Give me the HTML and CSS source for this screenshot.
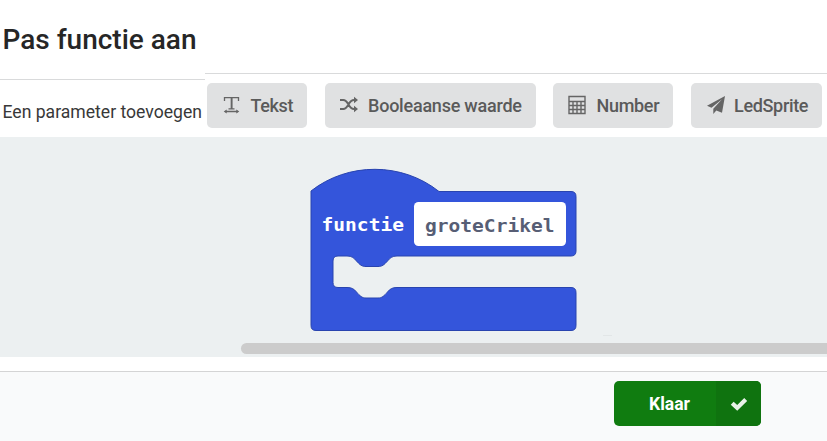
FILE: index.html
```html
<!DOCTYPE html>
<html lang="nl">
<head>
<meta charset="utf-8">
<title>Pas functie aan</title>
<link rel="stylesheet" href="styles.css">
</head>
<body>
<main class="dialog">
  <header class="header"><h1 class="title"><svg width="200" height="40"><text x="2.5" y="30" textLength="194" lengthAdjust="spacingAndGlyphs">Pas functie aan</text></svg></h1></header>
  <section class="toolbar">
    <div class="label"><svg width="205" height="30"><text x="2.5" y="20" textLength="199.5" lengthAdjust="spacingAndGlyphs">Een parameter toevoegen</text></svg></div>
    <div class="params">
      <button class="param text"><svg class="icon" viewBox="0 0 18 18"><path d="M1.5 5V1.7h14V5M8.5 1.7v11M5.5 12.8h6M2.5 15.5h12" fill="none" stroke="currentColor" stroke-width="1.3"/><path d="M7.8 2h1.7v11H7.8zM.7 15.5l3-2v4zM16.3 15.5l-3-2v4z"/></svg><svg class="caption" width="44" height="24"><text x="0.5" y="17" textLength="43">Tekst</text></svg></button>
      <button class="param bool"><svg class="icon" viewBox="0 0 18 18"><path d="M0 4h3.2c5.7 0 4.8 9 10.8 9h1M0 13h3.2c5.7 0 4.8-9 10.8-9h1" fill="none" stroke="currentColor" stroke-width="2"/><path d="M14 .7L18 4l-4 3.3zM14 9.7l4 3.3-4 3.3z"/></svg><svg class="caption" width="155" height="24"><text x="0" y="17" textLength="154">Booleaanse waarde</text></svg></button>
      <button class="param number"><svg class="icon" viewBox="0 0 18 18"><path d="M1 .5h16v17H1zM1 5.500h16M1 9.500h16M1 13.500h16M5 5.500v12M9 5.500v12M13 5.500v12" fill="none" stroke="currentColor" stroke-width="1.400"/></svg><svg class="caption" width="64" height="24"><text x="-0.5" y="17" textLength="63">Number</text></svg></button>
      <button class="param sprite"><svg class="icon" viewBox="0 0 18 18"><path d="M18 0L0 9.8l4.500 2L15 3.200 6.300 12.700V18l3-3.500 5.700 2.200z"/></svg><svg class="caption" width="76" height="24"><text x="0" y="17" textLength="74.5">LedSprite</text></svg></button>
    </div>
  </section>
  <section class="workspace">
    <svg class="block" width="268" height="164" viewBox="310 168 268 164">
      <path class="shape" d="M311 191C348 162 402 162 439 191.500H571Q576 191.500 576 196.500V251Q576 256 571 256H397C392 256 390 258 387.500 261C384 265 382 266.500 378 266.500H366C362 266.500 360 265 356.500 261C354 258 352 256 347 256H338Q333 256 333 261V282.500Q333 287.500 338 287.500H347C352 287.500 354 289 356.500 292C360 296 362 298 366 298H378C382 298 384 296 387.500 292C390 289 392 287.500 397 287.500H571Q576 287.500 576 292.500V325.500Q576 330.500 571 330.500H316Q311 330.500 311 325.500Z"/>
      <rect x="414" y="202" width="152" height="44" rx="4.500" fill="#fff"/>
      <text class="keyword" x="321.500" y="231" textLength="82.500" lengthAdjust="spacingAndGlyphs">functie</text>
      <text class="name" x="425" y="232" textLength="129.500" lengthAdjust="spacingAndGlyphs">groteCrikel</text>
      <path d="M603 335.500h9" stroke="#e2e6e7"/>
    </svg>
    <div class="scrollbar"></div>
  </section>
  <footer class="footer">
    <button class="done"><span class="done-text"><svg width="42" height="24"><text x="0" y="17" textLength="41" lengthAdjust="spacingAndGlyphs">Klaar</text></svg></span><span class="done-icon"><svg width="18" height="14" viewBox="0 0 18 14"><path d="M2.200 6.200l5 4.700L15.700 2.500" fill="none" stroke="#e8f2e8" stroke-width="4.200"/></svg></span></button>
  </footer>
</main>
</body>
</html>
```
FILE: styles.css
```css
* { box-sizing: border-box; }
body { margin: 0; background: #fff; font-family: Roboto, sans-serif; overflow: hidden; }
svg { display: block; flex: none; overflow: visible; }
button { border: 0; padding: 0; font: inherit; }
.dialog { width: 827px; height: 441px; display: flex; flex-direction: column; }
.header { height: 73px; padding-top: 19px; }
.title { margin: 0; font-size: 28px; font-weight: 500; }
.title text { fill: #262626; }
.toolbar { height: 64px; display: grid; grid-template-columns: 205px 1fr; }
.label { margin-top: 6px; border-top: 1px solid #d9dadb; padding-top: 18px; font-size: 18px; }
.label text { fill: #383838; }
.params { border-top: 1px solid #d9dadb; padding: 9px 5px 0 2px; display: flex; justify-content: space-between; }
.param { height: 45px; border-radius: 5px; background: #e0e1e2; color: #656565; display: flex; padding: 12px 0 0 16px; font-size: 18px; font-weight: 500; }
.param .icon { width: 18px; height: 18px; margin-top: 1px; fill: currentColor; margin-right: 9px; }
.caption text { fill: #5a5a5a; }
.text { width: 100px; }
.bool { width: 211px; padding-left: 15px; }
.bool .icon { margin-right: 10px; }
.number { width: 120px; padding-left: 15px; }
.number .icon { margin-right: 11px; }
.sprite { width: 131px; }
.workspace { height: 220px; background: #ecf0f1; padding-top: 31px; display: flex; flex-direction: column; }
.block { margin-left: 310px; }
.shape { fill: #3455db; stroke: #2944af; stroke-width: 1; }
.keyword, .name { font-family: "DejaVu Sans Mono", monospace; font-size: 18px; font-weight: 700; }
.keyword { fill: #fff; }
.name { fill: #575e75; }
.scrollbar { height: 11px; margin: 11px 0 0 241px; background: #ccc; border-radius: 6px 0 0 6px; }
.footer { height: 70px; margin-top: 14px; border-top: 1px solid #d4d4d5; background: #f9fafb; padding: 9px 0 0 614px; }
.done { width: 147px; height: 45px; display: flex; border-radius: 5px; overflow: hidden; background: #107c10; color: #fff; font-size: 18px; font-weight: 700; }
.done-text { width: 102px; padding: 12px 0 0 35px; }
.done-text text { fill: #fff; }
.done-icon { width: 45px; height: 45px; background: #0f730f; padding: 16px 0 0 14px; }
```
